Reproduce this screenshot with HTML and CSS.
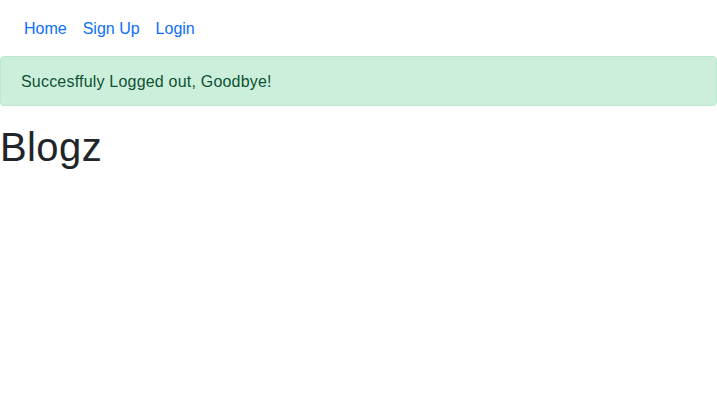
FILE: index.html
```html
<!DOCTYPE html>
<html lang="en">
<head>
<meta charset="utf-8">
<title>Blogz</title>
<link rel="stylesheet" href="styles.css">
</head>
<body>
<nav class="navbar">
  <ul class="nav-list">
    <li><a class="nav-link" href="#">Home</a></li>
    <li><a class="nav-link" href="#">Sign Up</a></li>
    <li><a class="nav-link" href="#">Login</a></li>
  </ul>
</nav>
<div class="alert">Succesffuly Logged out, Goodbye!</div>
<h1 class="title">Blogz</h1>
</body>
</html>
```
FILE: styles.css
```css
* { box-sizing: border-box; }
body {
  margin: 0;
  font-family: "Liberation Sans", Arial, sans-serif;
  font-size: 16px;
  line-height: 1.5;
  letter-spacing: 0.2px;
  color: #212529;
  background: #fff;
}
.navbar {
  padding: 8px 16px;
}
.nav-list {
  list-style: none;
  margin: 0;
  padding: 0;
  display: flex;
}
.nav-link {
  display: block;
  padding: 9px 8px 7px;
  color: #0d6efd;
  text-decoration: none;
  letter-spacing: 0;
}
.alert {
  padding: 13px 20px 11px;
  margin-bottom: 16px;
  border: 1px solid #bce8cf;
  border-radius: 4px;
  background: #ccefdc;
  color: #0f5132;
}
.title {
  margin: 0 0 8px;
  padding-top: 1px;
  font-size: 40px;
  font-weight: 500;
  line-height: 1.2;
  letter-spacing: 0.4px;
}
```
